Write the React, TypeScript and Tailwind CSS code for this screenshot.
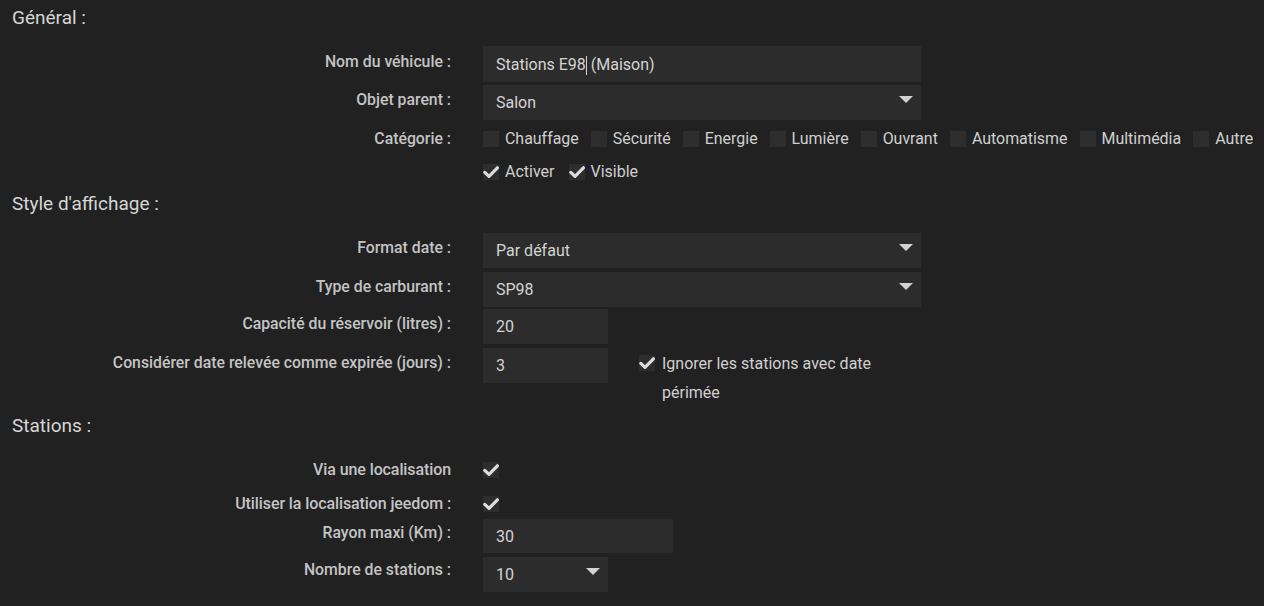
import React from "react";

const font = { fontFamily: "Roboto, 'Liberation Sans', sans-serif" };

function Caret() {
  return (
    <svg width="14" height="8" viewBox="0 0 14 8" className="shrink-0">
      <path d="M0 0 L14 0 L7 7 Z" fill="#d2d2d2" />
    </svg>
  );
}

function Check() {
  return (
    <svg width="16" height="16" viewBox="0 0 16 16">
      <path d="M1.8 8.4 L6 12.4 L14.4 3.8" stroke="#dcdcdc" strokeWidth="3.2" fill="none" strokeLinecap="round" strokeLinejoin="round" />
    </svg>
  );
}

function Box({ checked }: { checked?: boolean }) {
  return (
    <span className="w-[16px] h-[16px] bg-[#2d2d2d] flex items-center justify-center shrink-0">
      {checked ? <Check /> : null}
    </span>
  );
}

function Label({ children, pt = "pt-[5px]" }: { children: React.ReactNode; pt?: string }) {
  return (
    <div className={`w-[439px] shrink-0 text-right text-[15.8px] leading-[20px] font-medium text-[#c4c4c4] whitespace-nowrap ${pt}`}>{children}</div>
  );
}

function Input({ value, w, h = "h-[35px]" }: { value: string; w: string; h?: string }) {
  return (
    <div className={`${w} ${h} bg-[#2c2c2c] flex items-center pl-[13px] pt-[1px] text-[16px] text-[#d4d4d4]`}>{value}</div>
  );
}

function Select({ value, w, h = "h-[35px]" }: { value: string; w: string; h?: string }) {
  return (
    <div className={`${w} ${h} bg-[#2c2c2c] flex items-center justify-between pl-[13px] pr-[8px] text-[16px] text-[#d4d4d4]`}>
      <span className="pt-[1px]">{value}</span>
      <span className="-mt-[6px]"><Caret /></span>
    </div>
  );
}

function Header({ children }: { children: React.ReactNode }) {
  return <div className="h-[36px] flex items-center text-[19px] text-[#d6d6d6]">{children}</div>;
}

export default function App() {
  const cats = ["Chauffage", "Sécurité", "Energie", "Lumière", "Ouvrant", "Automatisme", "Multimédia", "Autre"];
  return (
    <div className="w-[1264px] h-[606px] bg-[#212121] overflow-hidden px-[12px]" style={font}>
      <Header>Général :</Header>
      <div className="mt-[10px] flex">
        <Label pt="pt-[6px]">Nom du véhicule :</Label>
        <div className="ml-[32px]">
          <div className="w-[438px] h-[36px] bg-[#2c2c2c] flex items-center pl-[13px] pt-[2px] text-[16px] text-[#d4d4d4] whitespace-pre">
            <span>Stations E98</span>
            <span className="inline-block w-[1px] h-[19px] bg-[#d4d4d4]"></span>
            <span> (Maison)</span>
          </div>
        </div>
      </div>
      <div className="mt-[3px] flex">
        <Label>Objet parent :</Label>
        <div className="ml-[32px]"><Select value="Salon" w="w-[438px]" /></div>
      </div>
      <div className="mt-[11px] flex items-center h-[16px]">
        <div className="w-[439px] shrink-0 text-right text-[15.8px] font-medium text-[#c4c4c4]">Catégorie :</div>
        <div className="ml-[32px] flex items-center gap-[12px] text-[15.95px] text-[#d0d0d0] whitespace-nowrap">
          {cats.map((c) => (
            <span key={c} className="flex items-center gap-[6px]">
              <Box />
              <span>{c}</span>
            </span>
          ))}
        </div>
      </div>
      <div className="mt-[17px] flex items-center h-[16px]">
        <div className="w-[439px] shrink-0"></div>
        <div className="ml-[32px] flex items-center gap-[14px] text-[16px] text-[#d0d0d0]">
          <span className="flex items-center gap-[6px]"><Box checked /><span>Activer</span></span>
          <span className="flex items-center gap-[6px]"><Box checked /><span>Visible</span></span>
        </div>
      </div>

      <div className="mt-[6px]"><Header>Style d'affichage :</Header></div>
      <div className="mt-[11px] flex">
        <Label>Format date :</Label>
        <div className="ml-[32px]"><Select value="Par défaut" w="w-[438px]" /></div>
      </div>
      <div className="mt-[4px] flex">
        <Label>Type de carburant :</Label>
        <div className="ml-[32px]"><Select value="SP98" w="w-[438px]" /></div>
      </div>
      <div className="mt-[2px] flex">
        <Label>Capacité du réservoir (litres) :</Label>
        <div className="ml-[32px]"><Input value="20" w="w-[125px]" /></div>
      </div>
      <div className="mt-[4px] flex">
        <Label>Considérer date relevée comme expirée (jours) :</Label>
        <div className="ml-[32px]"><Input value="3" w="w-[125px]" /></div>
        <div className="ml-[31px] w-[250px] flex items-start gap-[7px] pt-[7px]">
          <Box checked />
          <span className="-mt-[6px] text-[16px] leading-[29px] text-[#d0d0d0]">Ignorer les stations avec date périmée</span>
        </div>
      </div>

      <div className="mt-[1px]"><Header>Stations :</Header></div>
      <div className="mt-[18px] flex items-center h-[16px]">
        <div className="w-[439px] shrink-0 text-right text-[16px] font-medium text-[#c4c4c4] tracking-[-0.1px]">Via une localisation</div>
        <div className="ml-[32px]"><Box checked /></div>
      </div>
      <div className="mt-[18px] flex items-center h-[16px]">
        <div className="w-[439px] shrink-0 text-right text-[16px] font-medium text-[#c4c4c4] tracking-[-0.1px]">Utiliser la localisation jeedom :</div>
        <div className="ml-[32px]"><Box checked /></div>
      </div>
      <div className="mt-[7px] flex">
        <Label pt="pt-[4px]">Rayon maxi (Km) :</Label>
        <div className="ml-[32px]"><Input value="30" w="w-[190px]" h="h-[34px]" /></div>
      </div>
      <div className="mt-[4px] flex">
        <Label pt="pt-[3px]">Nombre de stations :</Label>
        <div className="ml-[32px]"><Select value="10" w="w-[125px]" /></div>
      </div>
    </div>
  );
}
